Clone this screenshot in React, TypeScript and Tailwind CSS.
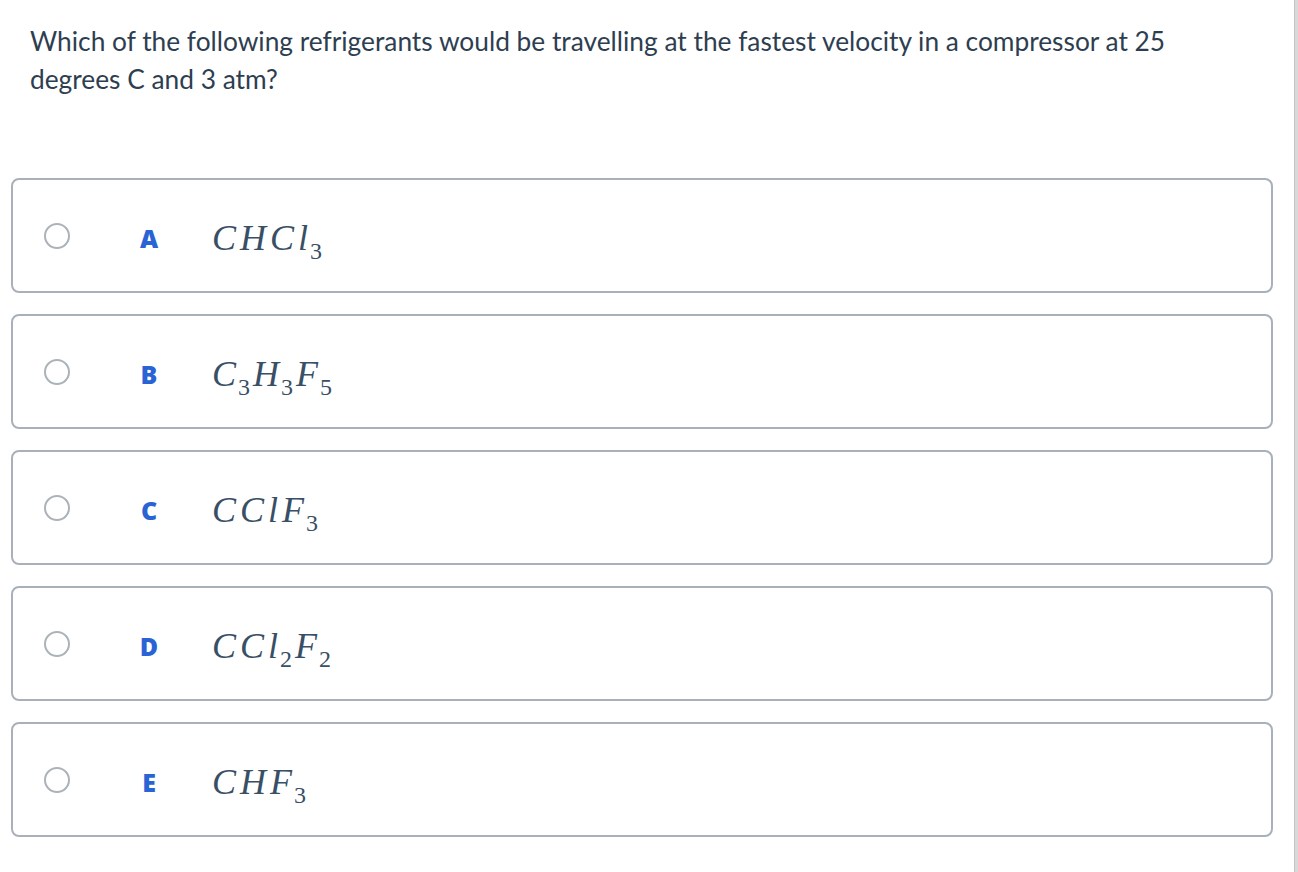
import React from "react";

type Part = { t: string; sub?: string };

const options: { key: string; formula: Part[] }[] = [
  { key: "A", formula: [{ t: "C" }, { t: "H" }, { t: "C" }, { t: "l", sub: "3" }] },
  { key: "B", formula: [{ t: "C", sub: "3" }, { t: "H", sub: "3" }, { t: "F", sub: "5" }] },
  { key: "C", formula: [{ t: "C" }, { t: "C" }, { t: "l" }, { t: "F", sub: "3" }] },
  { key: "D", formula: [{ t: "C" }, { t: "C" }, { t: "l", sub: "2" }, { t: "F", sub: "2" }] },
  { key: "E", formula: [{ t: "C" }, { t: "H" }, { t: "F", sub: "3" }] },
];

function Formula({ parts }: { parts: Part[] }) {
  return (
    <span className="font-['Liberation_Serif',serif] text-[36px] leading-none text-[#384f66] whitespace-nowrap">
      {parts.map((p, i) => (
        <span key={i} className="inline-block">
          <span className={p.sub ? "italic pr-[2px]" : "italic pr-[4px]"}>{p.t}</span>
          {p.sub && (
            <span className="not-italic text-[24px] relative top-[9px] pr-[3px]">{p.sub}</span>
          )}
        </span>
      ))}
    </span>
  );
}

export default function App() {
  return (
    <div className="min-h-[872px] bg-white flex font-['Lato','Noto_Sans',sans-serif]">
      <div className="flex-1 pl-[11px] pr-[21px]">
        <p className="pt-[22px] pl-[19px] text-[26.3px] leading-[38px] text-[#2d3e50] whitespace-nowrap">
          Which of the following refrigerants would be travelling at the fastest velocity in a compressor at 25
          <br />
          degrees C and 3 atm?
        </p>
        <div className="mt-[80px] flex flex-col gap-[21px]">
          {options.map((o) => (
            <div
              key={o.key}
              className="h-[115px] rounded-[8px] border-2 border-[#a8b1ba] flex items-center"
            >
              <span className="ml-[31px] w-[26px] h-[26px] rounded-full border-2 border-[#aab2ba]" />
              <span className="ml-[64px] w-[30px] text-center font-['Open_Sans',sans-serif] font-extrabold text-[25px] text-[#2a63d4] relative top-[3px]">
                {o.key}
              </span>
              <span className="ml-[48px] relative top-[2px]">
                <Formula parts={o.formula} />
              </span>
            </div>
          ))}
        </div>
      </div>
      <div className="w-[4px] bg-[#d9d9d9] border-l border-[#c4c4c4]" />
    </div>
  );
}
